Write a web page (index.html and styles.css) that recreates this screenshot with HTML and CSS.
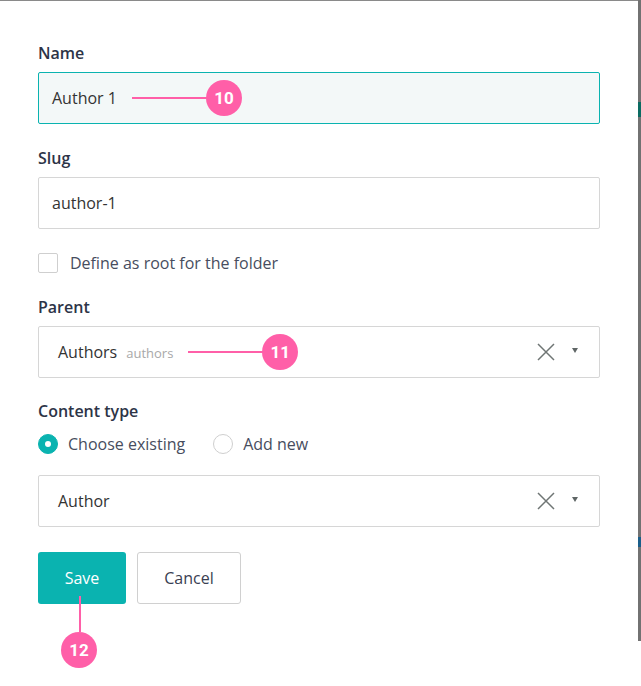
FILE: index.html
```html
<!DOCTYPE html>
<html lang="en">
<head>
    <meta charset="UTF-8">
    <meta name="viewport" content="width=device-width, initial-scale=1.0">
    <title>Edit Folder</title>
    <link rel="stylesheet" href="styles.css">
</head>
<body>
    <div class="panel">
        <div class="form">
            <div class="field">
                <label class="label">Name</label>
                <div class="input focused">
                    <span class="value">Author 1</span>
                    <span class="callout callout-h" style="width: 76px;"></span>
                    <span class="badge">10</span>
                </div>
            </div>

            <div class="field">
                <label class="label">Slug</label>
                <div class="input">
                    <span class="value">author-1</span>
                </div>
            </div>

            <div class="check-row">
                <span class="checkbox"></span>
                <span class="option-text">Define as root for the folder</span>
            </div>

            <div class="field parent-field">
                <label class="label">Parent</label>
                <div class="input select">
                    <span class="value">Authors</span>
                    <span class="hint">authors</span>
                    <span class="callout callout-h" style="width: 76px;"></span>
                    <span class="badge">11</span>
                    <span class="spacer"></span>
                    <svg class="clear" width="18" height="18" viewBox="0 0 18 18"><path d="M1 1 L17 17 M17 1 L1 17" stroke="#6f7574" stroke-width="1.5" fill="none"/></svg>
                    <span class="caret"></span>
                </div>
            </div>

            <label class="label">Content type</label>
            <div class="radio-row">
                <span class="radio checked"></span>
                <span class="option-text">Choose existing</span>
                <span class="radio"></span>
                <span class="option-text">Add new</span>
            </div>

            <div class="input select type-select">
                <span class="value">Author</span>
                <span class="spacer"></span>
                <svg class="clear" width="18" height="18" viewBox="0 0 18 18"><path d="M1 1 L17 17 M17 1 L1 17" stroke="#6f7574" stroke-width="1.5" fill="none"/></svg>
                <span class="caret"></span>
            </div>

            <div class="actions">
                <div class="save-wrap">
                    <button class="btn btn-primary">Save</button>
                    <span class="callout callout-v"></span>
                    <span class="badge">12</span>
                </div>
                <button class="btn btn-default">Cancel</button>
            </div>
        </div>
    </div>
    <span class="window-edge"></span>
    <span class="edge-mark teal"></span>
    <span class="edge-mark blue"></span>
</body>
</html>
```

FILE: styles.css
```css
/* Base */
body { margin: 0; font-family: "Open Sans", "Noto Sans", sans-serif; background: #fff; color: #2d3447; }
.panel { width: 638px; min-height: 686px; background: #fff; border-top: 1px solid #8a8a8a; box-sizing: border-box; }
.form { padding: 41px 0 0 38px; width: 562px; }

/* Fields */
.field { margin-bottom: 23px; }
.parent-field { margin-bottom: 22px; }
.label { display: block; font-size: 16px; font-weight: 600; line-height: 22px; margin-bottom: 8px; color: #2d3447; }
.input { position: relative; display: flex; align-items: center; height: 52px; box-sizing: border-box; border: 1px solid #d6d6d6; border-radius: 2px; padding: 0 13px; background: #fff; font-size: 16px; color: #333; }
.input.focused { border-color: #0ab3b0; background: #f3f8f8; }
.select { padding-left: 19px; padding-right: 21px; }
.value { line-height: 22px; }
.hint { font-size: 13px; color: #a8a8a8; margin-left: 9px; margin-top: 2px; }
.spacer { flex: 1; }
.clear { margin-right: 17px; }
.caret { width: 0; height: 0; border-left: 3.5px solid transparent; border-right: 3.5px solid transparent; border-top: 5px solid #5f6666; margin-top: -4px; }

/* Checkbox and radios */
.check-row { display: flex; align-items: center; height: 22px; margin-bottom: 22px; }
.checkbox { width: 18px; height: 18px; border: 1px solid #cfcfcf; border-radius: 2px; margin-right: 12px; }
.option-text { font-size: 16px; color: #474d5e; line-height: 22px; }
.radio-row { display: flex; align-items: center; height: 22px; margin-top: 11px; margin-bottom: 20px; }
.radio { width: 18px; height: 18px; border: 1px solid #cfcfcf; border-radius: 50%; margin-right: 10px; }
.radio.checked { background: #0ab3b0; border-color: #0ab3b0; position: relative; }
.radio.checked::after { content: ""; position: absolute; left: 6px; top: 6px; width: 6px; height: 6px; border-radius: 50%; background: #fff; }
.option-text + .radio { margin-left: 28px; }

/* Buttons */
.type-select { margin-bottom: 25px; }
.actions { display: flex; gap: 11px; }
.save-wrap { display: flex; flex-direction: column; align-items: center; width: 88px; }
.btn { height: 52px; font-family: inherit; font-size: 16px; border-radius: 3px; cursor: pointer; }
.btn-primary { width: 88px; background: #0ab3b0; border: none; color: #fff; }
.btn-default { width: 104px; background: #fff; border: 1px solid #d0d0d0; color: #3a4052; }

/* Annotations */
.callout { display: block; background: #ff5fa8; }
.callout-h { height: 2px; margin-left: 15px; }
.callout-v { width: 2px; height: 36px; margin-top: -8px; margin-left: -4px; }
.badge { display: flex; align-items: center; justify-content: center; width: 36px; height: 36px; border-radius: 50%; background: #ff5fa8; color: #fff; font-family: Roboto, sans-serif; font-weight: 700; font-size: 17px; margin-left: -2px; }
.save-wrap .badge { margin-left: -6px; }

/* Window edge */
.window-edge { position: absolute; left: 638px; top: 0; width: 3px; height: 641px; background: #727272; }
.edge-mark { position: absolute; left: 638px; width: 3px; }
.edge-mark.teal { top: 102px; height: 15px; background: #0b6b62; }
.edge-mark.blue { top: 537px; height: 10px; background: #1a5e8a; }
```
